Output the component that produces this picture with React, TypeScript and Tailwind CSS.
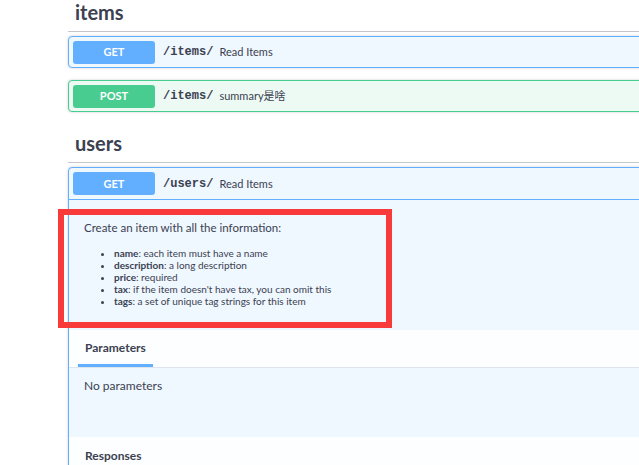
import React from 'react'

type OpRowProps = {
    method: string;
    path: string;
    summary: string;
    badge: string;
    frame: string;
}

function OpSummary({ method, path, summary, badge, height }: { method: string, path: string, summary: string, badge: string, height: string }) {
    return (
        <div className={`${height} flex items-center px-[4px] leading-[16px]`}>
            <span className={`${badge} w-[82px] h-[23px] rounded-[3px] flex items-center justify-center text-white text-[11px] font-bold`}>{method}</span>
            <span className="ml-[8px] font-['Liberation_Mono',monospace] font-bold text-[12px]">{path}</span>
            <span className="ml-[6px] text-[11px]">{summary}</span>
        </div>
    )
}

function OpRow({ method, path, summary, badge, frame }: OpRowProps) {
    return (
        <div className={`${frame} border rounded-[4px] shadow-[0_0_3px_rgba(0,0,0,0.19)]`}>
            <OpSummary method={method} path={path} summary={summary} badge={badge} height="h-[30px]" />
        </div>
    )
}

function TagHeading({ title, className }: { title: string, className?: string }) {
    return (
        <h3 className={`${className ?? ''} pl-[7px] pb-[6px] text-[20px] leading-[26px] font-bold border-b border-[#c4c6cb]`}>{title}</h3>
    )
}

const fields = [
    { key: 'name', text: 'each item must have a name' },
    { key: 'description', text: 'a long description' },
    { key: 'price', text: 'required' },
    { key: 'tax', text: "if the item doesn't have tax, you can omit this" },
    { key: 'tags', text: 'a set of unique tag strings for this item' },
]

export default function App() {
    return (
        <div className="relative w-[639px] h-[465px] overflow-hidden bg-white text-[#3b4151] font-['Lato','Noto_Sans_CJK_SC',sans-serif]">
            <div className="ml-[68px] w-[720px]">
                <TagHeading title="items" className="-mt-[1px]" />
                <div className="mt-[4px] flex flex-col gap-[12px]">
                    <OpRow method="GET" path="/items/" summary="Read Items" badge="bg-[#61affe]" frame="bg-[#eff7ff] border-[#61affe]" />
                    <OpRow method="POST" path="/items/" summary="summary是啥" badge="bg-[#49cc90]" frame="bg-[#edfaf4] border-[#49cc90]" />
                </div>

                <TagHeading title="users" className="mt-[18px]" />
                <div className="mt-[4px] bg-[#eff7ff] border border-[#61affe] rounded-[4px] shadow-[0_0_3px_rgba(0,0,0,0.19)]">
                    <div className="border-b border-[#61affe]">
                        <OpSummary method="GET" path="/users/" summary="Read Items" badge="bg-[#61affe]" height="h-[31px]" />
                    </div>
                    <div className="h-[130px] pt-[20px] pl-[15px]">
                        <p className="text-[11.5px] leading-[16px]">Create an item with all the information:</p>
                        <ul className="mt-[11px] pl-[30px] list-disc text-[10px] leading-[12px]">
                            {fields.map(({ key, text }) => (
                                <li key={key}><b>{key}</b>: {text}</li>
                            ))}
                        </ul>
                    </div>
                    <div className="h-[38px] flex items-end bg-[#fcfeff] pl-[9px] border-b border-[#dfe5ec]">
                        <div className="px-[7px] pb-[8px] border-b-[3px] border-[#61affe] text-[12px] leading-[16px] font-bold">Parameters</div>
                    </div>
                    <div className="h-[69px] pt-[10px] pl-[15px] text-[12px] leading-[16px]">No parameters</div>
                    <div className="bg-[#fcfeff] h-[40px] pt-[11px] pl-[16px] text-[12px] leading-[16px] font-bold">Responses</div>
                </div>
            </div>
            <div className="absolute left-[58px] top-[209px] w-[334px] h-[119px] border-[6px] border-[#f83a3a]"></div>
        </div>
    )
}
